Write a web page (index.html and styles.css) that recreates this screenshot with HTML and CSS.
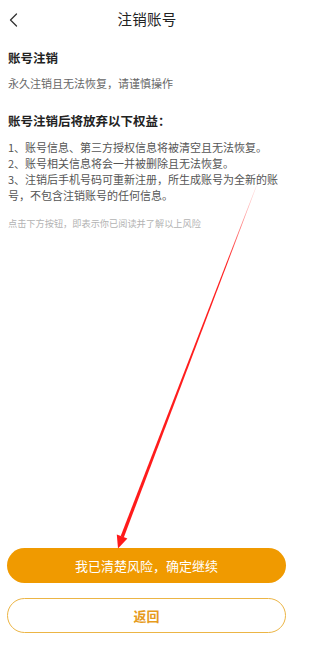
FILE: index.html
```html
<!DOCTYPE html>
<html lang="zh">
<head>
<meta charset="utf-8">
<title>注销账号</title>
<link rel="stylesheet" href="styles.css">
</head>
<body>
<div class="page">
  <header class="topbar">
    <svg class="back" width="10" height="16" viewBox="0 0 10 16"><polyline points="7.5,2 1.5,8 7.5,14" fill="none" stroke="#333" stroke-width="1.3" stroke-linecap="round" stroke-linejoin="round"/></svg>
    <div class="title">注销账号</div>
  </header>
  <main class="content">
    <h1 class="sec-title first">账号注销</h1>
    <p class="desc">永久注销且无法恢复，请谨慎操作</p>
    <h2 class="sec-title second">账号注销后将放弃以下权益：</h2>
    <ol class="list">
      <li>1、账号信息、第三方授权信息将被清空且无法恢复。</li>
      <li>2、账号相关信息将会一并被删除且无法恢复。</li>
      <li>3、注销后手机号码可重新注册，所生成账号为全新的账号，不包含注销账号的任何信息。</li>
    </ol>
    <p class="note">点击下方按钮，即表示你已阅读并了解以上风险</p>
  </main>
  <footer class="actions">
    <button class="btn primary">我已清楚风险，确定继续</button>
    <button class="btn outline">返回</button>
  </footer>
  <svg class="arrow" width="300" height="645" viewBox="0 0 300 645">
    <defs>
      <linearGradient id="fade" x1="256" y1="186" x2="122" y2="537" gradientUnits="userSpaceOnUse">
        <stop offset="0" stop-color="#ff2a2a" stop-opacity="0.15"/>
        <stop offset="0.22" stop-color="#ff2020" stop-opacity="1"/>
        <stop offset="1" stop-color="#ff1a1a" stop-opacity="1"/>
      </linearGradient>
    </defs>
    <polygon points="256.2,186 256.6,186.2 123.8,537.4 120.6,536.2" fill="url(#fade)"/>
    <polygon points="118,548.5 116.8,534.6 127.4,538.6" fill="#ff1a1a"/>
  </svg>
</div>
</body>
</html>
```
FILE: styles.css
```css
html, body {
  margin: 0;
  padding: 0;
  background: #ffffff;
}
body {
  font-family: "Noto Sans CJK SC", "Noto Sans", "Liberation Sans", sans-serif;
  color: #222;
}
.page {
  position: relative;
  width: 300px;
  height: 645px;
  display: flex;
  flex-direction: column;
  overflow: hidden;
}
.topbar {
  height: 38px;
  display: flex;
  align-items: center;
  justify-content: center;
  position: relative;
}
.back {
  position: absolute;
  left: 9px;
  top: 12px;
}
.title {
  font-size: 14.5px;
  line-height: 20px;
  color: #222;
  letter-spacing: 0.3px;
  margin-left: -6px;
}
.content {
  flex: 1;
  padding: 0 8px;
}
.sec-title {
  margin: 0;
  font-size: 12.5px;
  line-height: 20px;
  font-weight: 700;
  color: #222;
}
.sec-title.first {
  margin-top: 9.5px;
}
.sec-title.second {
  margin-top: 20px;
}
.desc {
  margin: 7.5px 0 0;
  font-size: 11px;
  line-height: 16px;
  color: #666;
}
.list {
  list-style: none;
  margin: 7.5px 0 0;
  padding: 0;
  max-width: 276px;
  font-size: 11px;
  line-height: 16px;
  color: #555;
}
.note {
  margin: 13px 0 0;
  font-size: 9.2px;
  line-height: 14px;
  color: #b3b3b3;
}
.actions {
  display: flex;
  flex-direction: column;
  gap: 15px;
  padding: 0 14px 12px 7px;
}
.btn {
  height: 35px;
  border-radius: 18px;
  font-family: inherit;
  font-size: 13px;
  padding: 0;
  cursor: pointer;
}
.primary {
  background: #f09a00;
  border: none;
  color: #ffffff;
}
.outline {
  background: #ffffff;
  border: 1px solid #ecb545;
  color: #e69b1c;
  font-weight: 700;
}
.arrow {
  position: absolute;
  left: 0;
  top: 0;
  pointer-events: none;
}
```
